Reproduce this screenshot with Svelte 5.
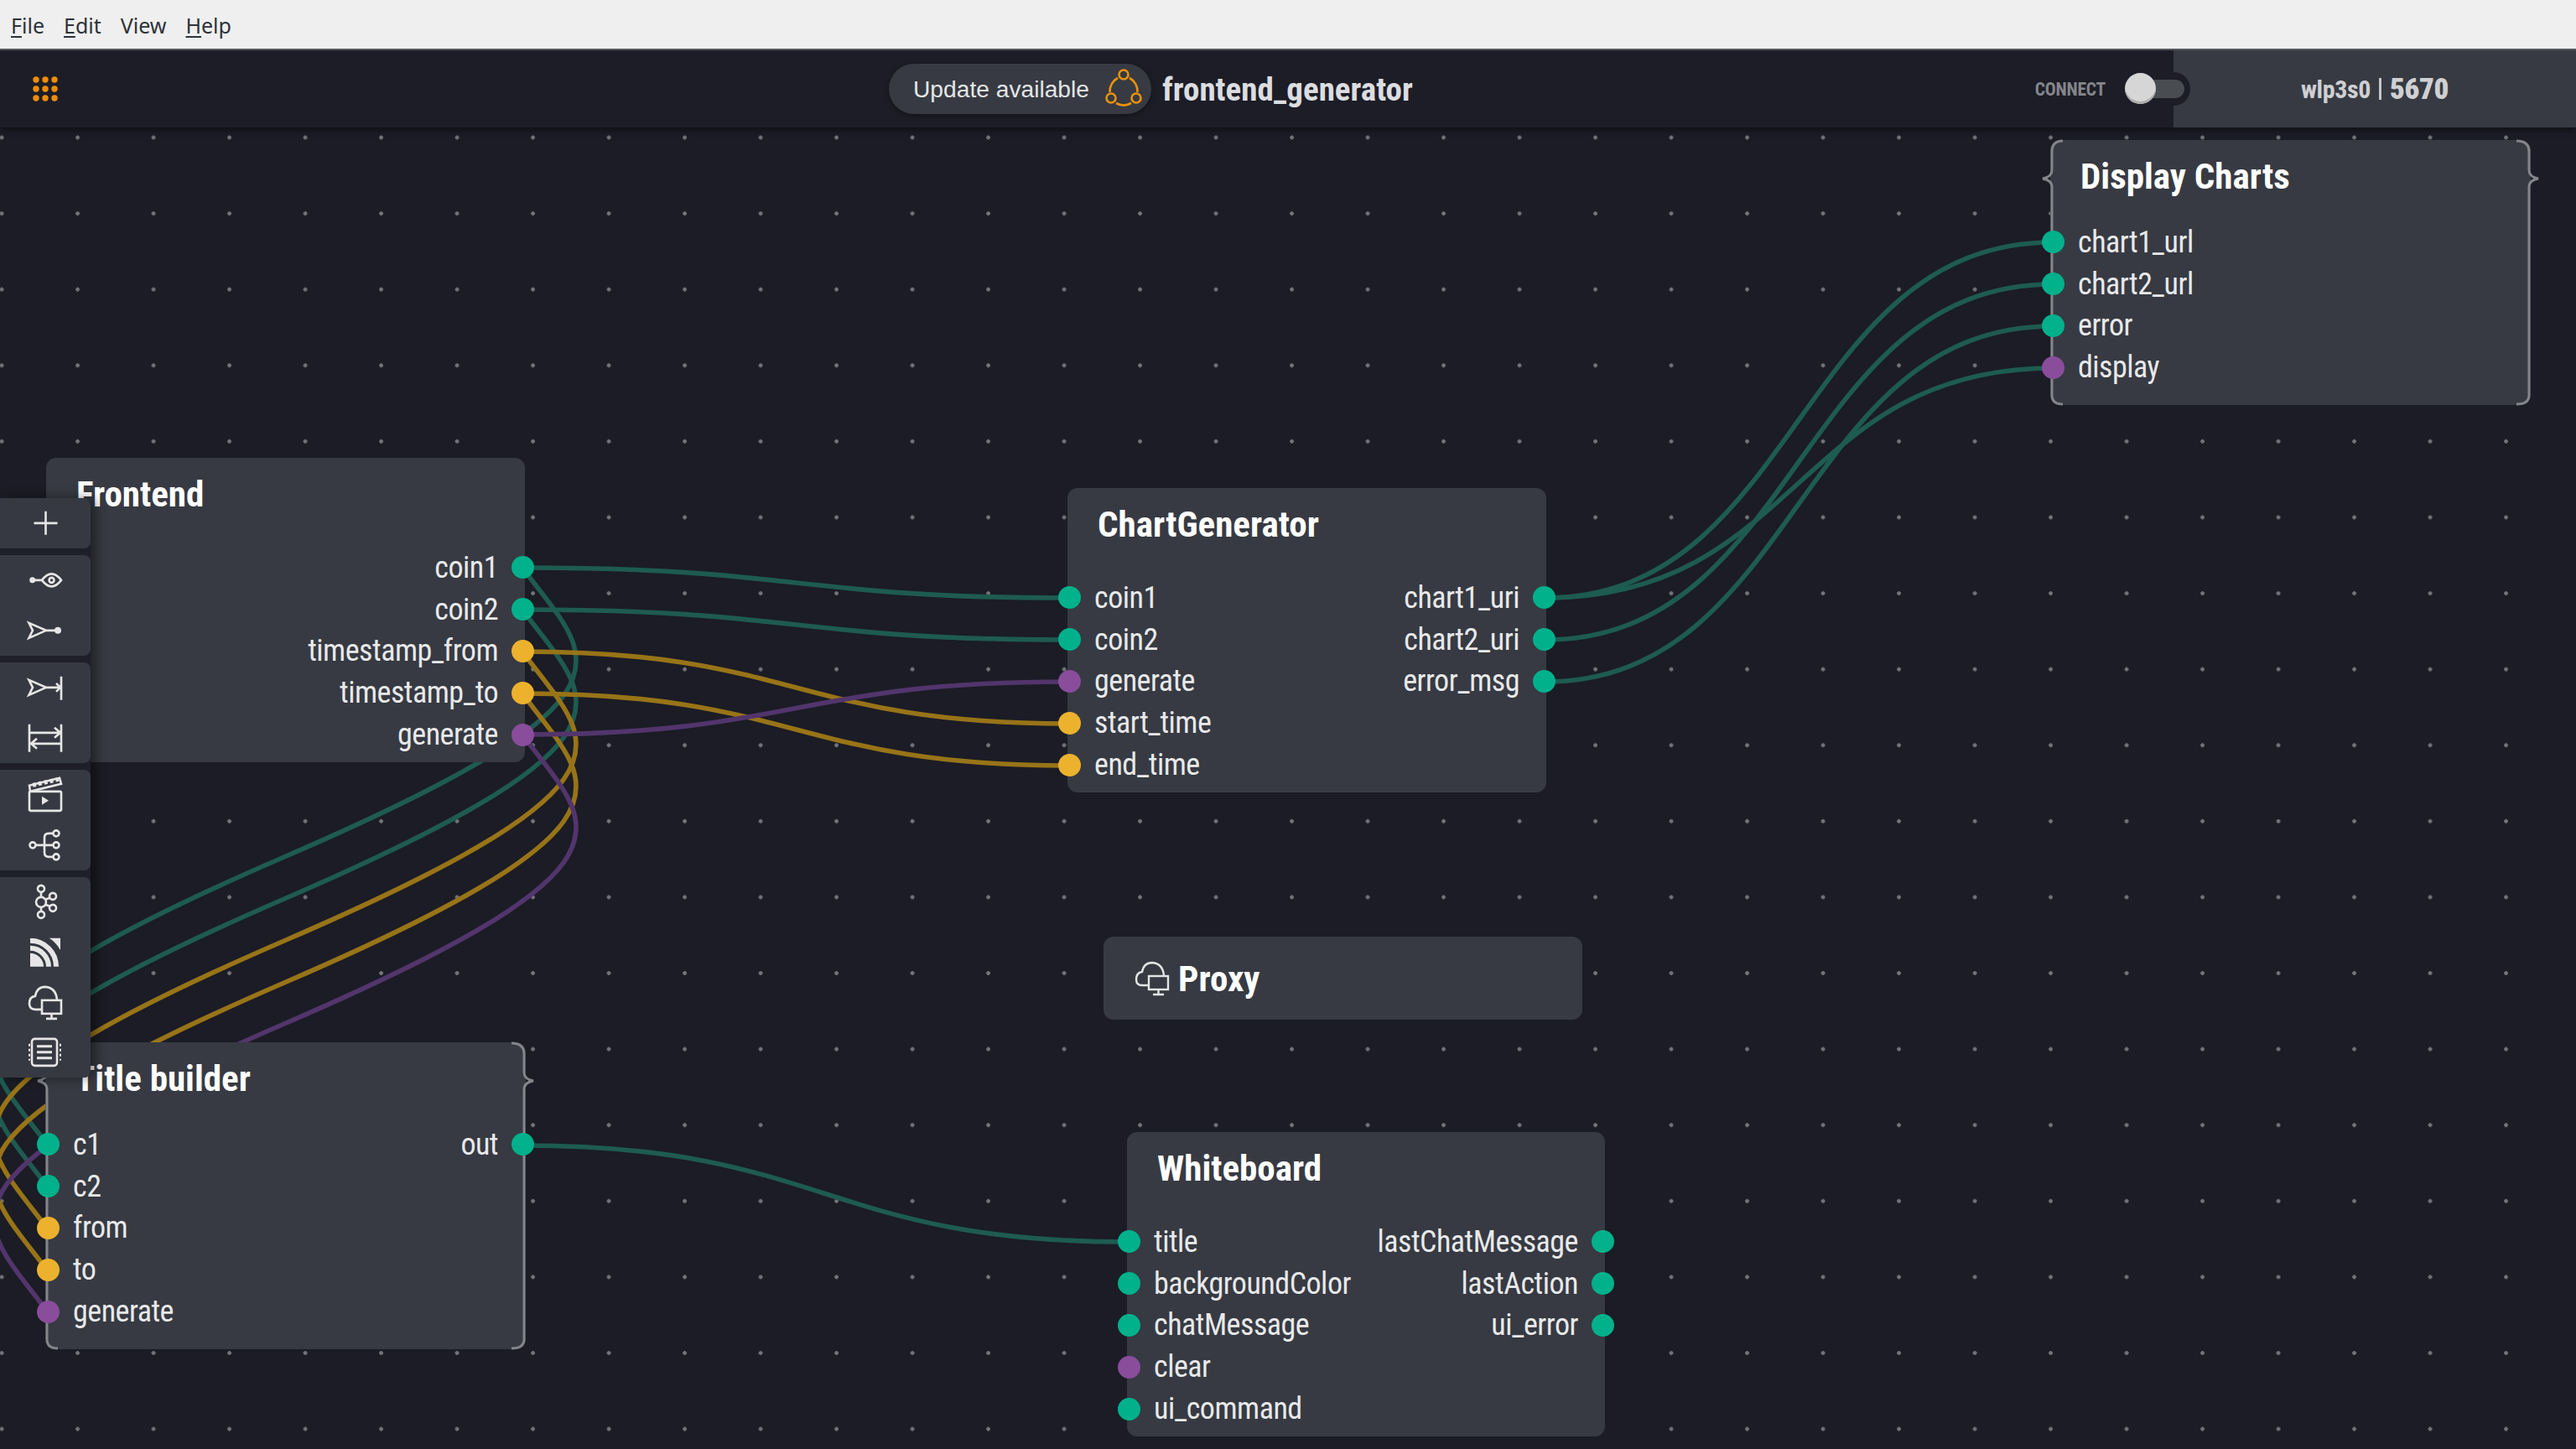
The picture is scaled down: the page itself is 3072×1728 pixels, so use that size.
<script>
  const menus = [
    { key: 'F', rest: 'ile' },
    { key: 'E', rest: 'dit' },
    { plain: 'View' },
    { key: 'H', rest: 'elp' }
  ];

  const nodes = [
    { title: 'Frontend', x: 55, y: 546, w: 571, inputs: [],
      outputs: [['coin1', 'data'], ['coin2', 'data'], ['timestamp_from', 'time'], ['timestamp_to', 'time'], ['generate', 'event']] },
    { title: 'ChartGenerator', x: 1273, y: 582, w: 571,
      inputs: [['coin1', 'data'], ['coin2', 'data'], ['generate', 'event'], ['start_time', 'time'], ['end_time', 'time']],
      outputs: [['chart1_uri', 'data'], ['chart2_uri', 'data'], ['error_msg', 'data']] },
    { title: 'Display Charts', x: 2445, y: 167, w: 573, brace: true,
      inputs: [['chart1_url', 'data'], ['chart2_url', 'data'], ['error', 'data'], ['display', 'event']], outputs: [] },
    { title: 'Title builder', x: 54, y: 1243, w: 573, brace: true,
      inputs: [['c1', 'data'], ['c2', 'data'], ['from', 'time'], ['to', 'time'], ['generate', 'event']],
      outputs: [['out', 'data']] },
    { title: 'Whiteboard', x: 1344, y: 1350, w: 570,
      inputs: [['title', 'data'], ['backgroundColor', 'data'], ['chatMessage', 'data'], ['clear', 'event'], ['ui_command', 'data']],
      outputs: [['lastChatMessage', 'data'], ['lastAction', 'data'], ['ui_error', 'data']] }
  ];

  // horizontal cubic between two ports
  const wire = (x1, y1, x2, y2) => {
    const d = (x2 - x1) / 2;
    return `M${x1} ${y1} C${x1 + d} ${y1} ${x2 - d} ${y2} ${x2} ${y2}`;
  };

  // wires that run back from Frontend to Title builder, same shape for all five
  const loop = (x, y) =>
    `M${x} ${y} C${x + 79} ${y + 108} ${x + 167} ${y + 150} ${x - 283} ${y + 344.5}` +
    ` C${x - 733} ${y + 539} ${x - 645} ${y + 581} ${x - 566} ${y + 689}`;

  const wires = [
    { type: 'data', d: loop(623, 677) },
    { type: 'data', d: loop(623, 727) },
    { type: 'time', d: loop(623, 777) },
    { type: 'time', d: loop(623, 827) },
    { type: 'event', d: loop(623, 876) },
    { type: 'data', d: wire(623, 677, 1276, 713) },
    { type: 'data', d: wire(623, 727, 1276, 763) },
    { type: 'time', d: wire(623, 777, 1276, 863) },
    { type: 'time', d: wire(623, 827, 1276, 913) },
    { type: 'event', d: wire(623, 876, 1276, 813) },
    { type: 'data', d: wire(1842, 713, 2448, 289) },
    { type: 'data', d: wire(1842, 763, 2448, 339) },
    { type: 'data', d: wire(1842, 813, 2448, 389) },
    { type: 'data', d: wire(1842, 713, 2448, 439) },
    { type: 'data', d: wire(623, 1366, 1345, 1481) }
  ];

  const brace = (w, h) => {
    const r = w - 2;
    return `M15 1 Q2 1 2 14 V36 Q2 44 -9 46 Q2 48 2 56 V${h - 12} Q2 ${h - 1} 15 ${h - 1}` +
      ` M${r - 15} 1 Q${r} 1 ${r} 14 V36 Q${r} 44 ${r + 11} 46 Q${r} 48 ${r} 56 V${h - 12} Q${r} ${h - 1} ${r - 15} ${h - 1}`;
  };
</script>

{#snippet cloud()}
  <path d="M36 19 Q35 4 22 3 Q12 3 10 14 Q3 15 3 23 Q3 30 10 30 H18" />
  <rect x="18" y="19" width="23" height="16" />
  <path d="M29.5 35 V41 M23 41 H36" />
{/snippet}

<div class="menubar">
  {#each menus as m}
    <span class="menu">{#if m.key}<u>{m.key}</u>{m.rest}{:else}{m.plain}{/if}</span>
  {/each}
</div>

<div class="stage">
  <header class="topbar">
    <div class="left">
      <svg class="apps" width="30" height="30" viewBox="0 0 30 30">
        {#each [4, 15, 26] as cy}
          {#each [4, 15, 26] as cx}
            <circle {cx} {cy} r="3.7" fill="#ee8c06" />
          {/each}
        {/each}
      </svg>
    </div>
    <div class="pill">
      <span>Update available</span>
      <svg width="44" height="48" viewBox="0 0 44 48" fill="none" stroke="#e8920c" stroke-width="2.6">
        <path d="M15 11 A18 18 0 0 0 5.5 28 M38.5 28 A18 18 0 0 0 29 11 M13 41 A18 18 0 0 0 31 41" />
        <circle cx="22" cy="7" r="5.5" />
        <circle cx="7" cy="35" r="5.5" />
        <circle cx="37" cy="35" r="5.5" />
      </svg>
    </div>
    <h1 class="flow-name">frontend_generator</h1>
    <span class="connect">CONNECT</span>
    <div class="toggle"><span class="knob"></span></div>
    <div class="host">wlp3s0 <i></i> <b>5670</b></div>
  </header>

  <svg class="wires" width="3072" height="1668" viewBox="0 60 3072 1668" fill="none">
    {#each wires as w}
      <path class="wire {w.type}" d={w.d} />
    {/each}
  </svg>

  {#each nodes as n}
    <section class="node" class:braced={n.brace} style="left:{n.x}px;top:{n.y - 60}px;width:{n.w}px">
      {#if n.brace}
        <svg class="brace" width={n.w} height={116 + 50 * n.inputs.length} fill="none">
          <path d={brace(n.w, 116 + 50 * n.inputs.length)} />
        </svg>
      {/if}
      <h2>{n.title}</h2>
      <div class="ports">
        <div class="col">
          {#each n.inputs as [name, type]}
            <div class="row in"><span class="dot {type}"></span><span>{name}</span></div>
          {/each}
        </div>
        <div class="col">
          {#each n.outputs as [name, type]}
            <div class="row out"><span>{name}</span><span class="dot {type}"></span></div>
          {/each}
        </div>
      </div>
    </section>
  {/each}

  <section class="node proxy" style="left:1316px;top:{1117 - 60}px;width:571px">
    <svg class="proxy-icon" width="44" height="44" viewBox="0 0 44 44" fill="none">{@render cloud()}</svg>
    <h2>Proxy</h2>
  </section>

  <nav class="toolbar">
    <div class="group">
      <svg class="ico" viewBox="0 0 44 44"><path d="M8.5 22 H36.5 M22.5 8 V36" /></svg>
    </div>
    <div class="group">
      <svg class="ico" viewBox="0 0 44 44">
        <circle class="solid" cx="6.7" cy="22" r="3.5" />
        <path d="M7 22 H18 M18 22 Q29.5 7 41 22 Q29.5 37 18 22" />
        <circle cx="29.5" cy="22" r="3" />
      </svg>
      <svg class="ico" viewBox="0 0 44 44">
        <path d="M2.5 13 L23 22 L2.5 31 L7 22 Z M23 22 H37" />
        <circle class="solid" cx="37" cy="22" r="4" />
      </svg>
    </div>
    <div class="group">
      <svg class="ico" viewBox="0 0 44 44">
        <path d="M2.5 13 L23 22 L2.5 31 L7 22 Z M23 22 H40 M35 17 L40 22 L35 27 M41 9 V37" />
      </svg>
      <svg class="ico" viewBox="0 0 44 44">
        <path d="M3 6 V39 M41 6 V39 M3 16 H40 M33 10 L40 16 L33 22 M41 29 H5 M12 23 L5 29 L12 35" />
      </svg>
    </div>
    <div class="group">
      <svg class="ico" viewBox="0 0 44 44">
        <rect x="3" y="18" width="38" height="23" rx="1.5" />
        <path class="solid" d="M18 24 L26 29 L18 34 Z" />
        <path d="M3 11 L39 2 L41 9 L4 18 Z" />
        <path class="stripes" d="M7 10.5 L38 3.5" />
      </svg>
      <svg class="ico" viewBox="0 0 44 44">
        <circle cx="7" cy="22" r="3.5" />
        <circle cx="35" cy="8" r="3.5" />
        <circle cx="35" cy="22" r="3.5" />
        <circle cx="35" cy="36" r="3.5" />
        <path d="M10.5 22 H31.5 M31.5 8 H26 Q21 8 21 13 V31 Q21 36 26 36 H31.5" />
      </svg>
    </div>
    <div class="group">
      <svg class="ico" viewBox="0 0 44 44">
        <circle cx="17" cy="22" r="6" />
        <circle cx="17" cy="6" r="4" />
        <circle cx="17" cy="37" r="4" />
        <circle cx="31" cy="15" r="4" />
        <circle cx="31" cy="29" r="4" />
        <path d="M17 10 V16 M17 28 V33 M22 19 L27.5 17 M22 25 L27.5 27" />
      </svg>
      <svg class="ico" viewBox="0 0 44 44">
        <defs><clipPath id="rss-box"><rect x="4" y="5" width="36" height="34" /></clipPath></defs>
        <g clip-path="url(#rss-box)">
          <circle class="solid" cx="4" cy="39" r="16" />
          <circle cx="4" cy="39" r="22" stroke-width="6" />
          <circle cx="4" cy="39" r="31" stroke-width="6" />
          <circle cx="4" cy="39" r="52" stroke-width="22" />
        </g>
      </svg>
      <svg class="ico" viewBox="0 0 44 44">{@render cloud()}</svg>
      <svg class="ico" viewBox="0 0 44 44">
        <rect x="6" y="6" width="30" height="32" rx="3.5" />
        <path d="M12 15 H30 M12 22 H30 M12 29 H30" stroke-width="3" />
        <path class="pins" d="M3 12 V32 M40 12 V32" />
      </svg>
    </div>
  </nav>
</div>

<style>
  :global(body) {
    margin: 0;
    background: #1b1c25;
  }
  .menubar {
    height: 60px;
    border-bottom: 2px solid #55565c;
    background: #efefef;
    display: flex;
    align-items: center;
    gap: 23px;
    padding: 2px 0 0 13px;
    font: 25px "Noto Sans", sans-serif;
    color: #2e3338;
    box-sizing: border-box;
  }
  .menu u {
    text-underline-offset: 3px;
  }
  .stage {
    position: relative;
    height: 1668px;
    overflow: hidden;
    background-color: #1b1c25;
    background-image: radial-gradient(circle, #74757c 0, #74757c 2px, transparent 2.6px);
    background-size: 90.5px 90.6px;
    background-position: -43.2px 58.7px;
    font-family: "Liberation Sans Narrow", "Roboto Condensed", Roboto, sans-serif;
  }
  .topbar {
    position: relative;
    z-index: 3;
    height: 92px;
    display: flex;
    align-items: center;
    background: #1c1d26;
    box-shadow: 0 3px 8px rgba(0, 0, 0, 0.45);
  }
  .left {
    width: 1060px;
    padding-left: 39px;
    box-sizing: border-box;
    display: flex;
  }
  .pill {
    width: 313px;
    height: 60px;
    box-sizing: border-box;
    padding: 0 11px 0 29px;
    display: flex;
    align-items: center;
    justify-content: space-between;
    border-radius: 30px;
    background: #373a42;
    box-shadow: 0 2px 6px rgba(0, 0, 0, 0.35);
    font: 28.2px "Liberation Sans", sans-serif;
    color: #e4e5e7;
  }
  .flow-name {
    margin: 2px 0 0 13px;
    font-size: 39px;
    font-weight: 700;
    color: #dcdde0;
  }
  .connect {
    margin-left: auto;
    font-size: 21.5px;
    font-weight: 700;
    letter-spacing: -0.2px;
    color: #85868b;
  }
  .toggle {
    position: relative;
    z-index: 1;
    width: 78px;
    height: 40px;
    margin: 0 -20px 0 23px;
    border-radius: 20px;
    background: #1c1d26;
  }
  .toggle::before {
    content: "";
    position: absolute;
    left: 10px;
    right: 7px;
    top: 9px;
    bottom: 9px;
    border-radius: 11px;
    background: #494c50;
  }
  .knob {
    position: absolute;
    left: 0;
    top: 1px;
    width: 37px;
    height: 37px;
    border-radius: 50%;
    background: #d6d6d6;
    box-shadow: inset 0 -3px 0 #adadad;
  }
  .host {
    width: 480px;
    height: 100%;
    display: flex;
    align-items: center;
    justify-content: center;
    gap: 10px;
    background: #373a42;
    font-size: 30px;
    font-weight: 700;
    letter-spacing: -0.4px;
    color: #cfd0d3;
  }
  .host i {
    width: 3px;
    height: 26px;
    background: #c4c5c8;
  }
  .host b {
    font-size: 35px;
  }
  .wires {
    position: absolute;
    left: 0;
    top: 0;
  }
  .wire {
    stroke-width: 5.6;
  }
  .wire.data { stroke: #1e5b51; }
  .wire.time { stroke: #987418; }
  .wire.event { stroke: #52356c; }
  .node {
    position: absolute;
    box-sizing: border-box;
    padding: 17px 0 8px;
    border-radius: 12px;
    background: #373a42;
    color: #e8e9eb;
  }
  .node h2 {
    margin: 0 0 37px 36px;
    height: 52px;
    line-height: 52px;
    font-size: 43px;
    font-weight: 700;
    color: #fff;
  }
  .node.braced {
    padding-bottom: 20px;
  }
  .node.braced h2 {
    margin-bottom: 28px;
  }
  .brace {
    position: absolute;
    left: 0;
    top: 0;
    overflow: visible;
  }
  .brace path {
    stroke: #83858b;
    stroke-width: 3;
  }
  .ports {
    display: flex;
    justify-content: space-between;
    position: relative;
    font-size: 36px;
    letter-spacing: -0.5px;
  }
  .row {
    height: 49.8px;
    display: flex;
    align-items: center;
    gap: 16px;
  }
  .row.in {
    margin-left: -11px;
  }
  .braced .row.in {
    margin-left: -10px;
  }
  .row.out {
    justify-content: flex-end;
    margin-right: -11px;
  }
  .braced .row.out {
    margin-right: -10px;
  }
  .dot {
    width: 27px;
    height: 27px;
    border-radius: 50%;
  }
  .dot.data { background: #00b18b; }
  .dot.time { background: #ecb22e; }
  .dot.event { background: #894d9b; }
  .node.proxy {
    height: 99px;
    padding: 0 0 0 36px;
    display: flex;
    align-items: center;
    gap: 9px;
  }
  .node.proxy h2 {
    margin: 0;
  }
  .proxy-icon {
    stroke: #e4e5e7;
    stroke-width: 2.4;
  }
  .toolbar {
    position: absolute;
    z-index: 2;
    left: 0;
    top: 534px;
    width: 108px;
    display: flex;
    flex-direction: column;
    gap: 8.6px;
    background: #1e1f28;
    border-radius: 0 8px 8px 0;
    box-shadow: 6px 0 14px rgba(0, 0, 0, 0.45);
  }
  .group {
    display: flex;
    flex-direction: column;
    align-items: center;
    border-radius: 0 8px 8px 0;
    background: #363941;
  }
  .ico {
    width: 44px;
    height: 44px;
    padding: 7.85px 0;
    box-sizing: content-box;
    fill: none;
    stroke: #e6e6e6;
    stroke-width: 2.6;
    overflow: visible;
  }
  .solid {
    fill: #e6e6e6;
    stroke: none;
  }
  .stripes {
    stroke-width: 5;
    stroke-dasharray: 4 3;
  }
  .pins {
    stroke-dasharray: 3 3;
    stroke-width: 2;
  }
</style>
